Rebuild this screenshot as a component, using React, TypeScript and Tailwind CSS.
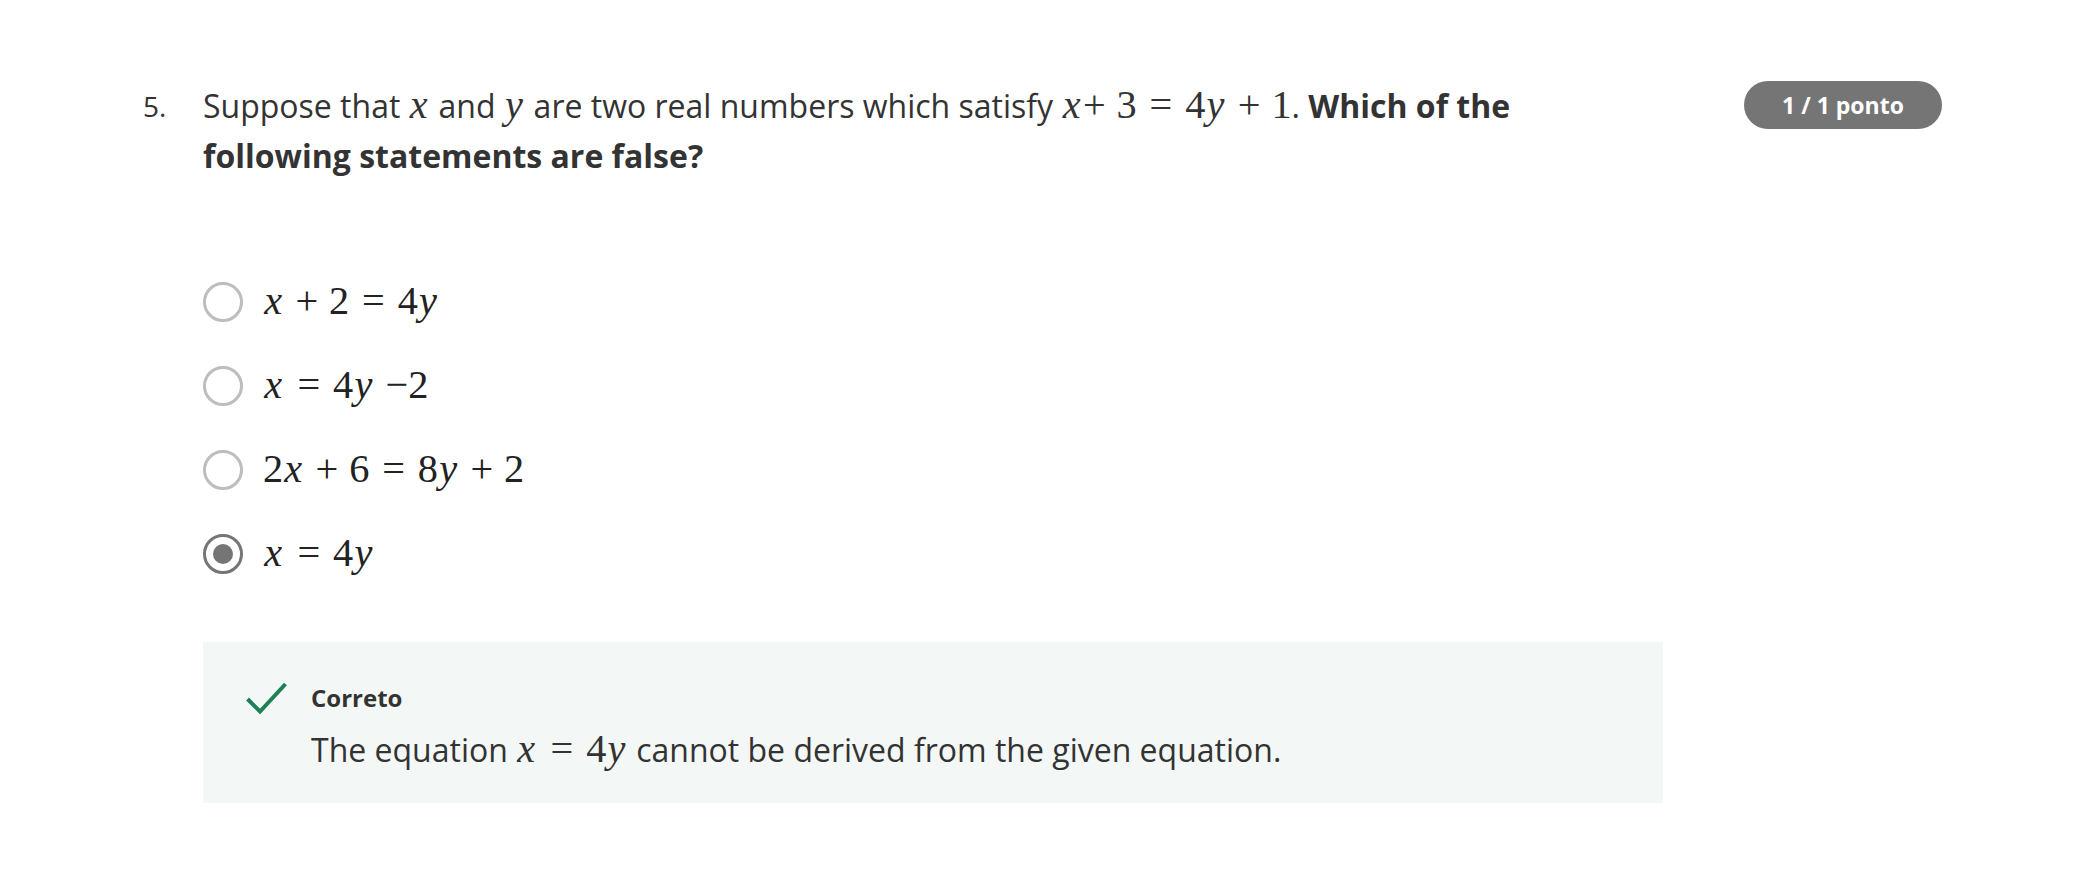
import type { ReactNode } from 'react'

// math bits, roughly how KaTeX spaces things (widened a bit for Times glyphs)
const V = ({ children }: { children: ReactNode }) => (
  <span className="italic pl-[0.03em] pr-[0.06em]">{children}</span>
)
const Bin = ({ children }: { children: ReactNode }) => (
  <span className="mx-[0.27em]">{children}</span>
)
const Rel = ({ children }: { children: ReactNode }) => (
  <span className="mx-[0.32em]">{children}</span>
)
const M = ({ children }: { children: ReactNode }) => (
  <span className="text-[1.26em] leading-none whitespace-nowrap font-['Liberation_Serif','DejaVu_Serif',serif]">
    {children}
  </span>
)

const options = [
  {
    id: 'a',
    checked: false,
    label: (
      <M>
        <V>x</V>
        <Bin>+</Bin>2<Rel>=</Rel>4<V>y</V>
      </M>
    ),
  },
  {
    id: 'b',
    checked: false,
    label: (
      <M>
        <V>x</V>
        <Rel>=</Rel>4<V>y</V>
        <span className="ml-[0.27em]">−</span>2
      </M>
    ),
  },
  {
    id: 'c',
    checked: false,
    label: (
      <M>
        2<V>x</V>
        <Bin>+</Bin>6<Rel>=</Rel>8<V>y</V>
        <Bin>+</Bin>2
      </M>
    ),
  },
  {
    id: 'd',
    checked: true,
    label: (
      <M>
        <V>x</V>
        <Rel>=</Rel>4<V>y</V>
      </M>
    ),
  },
]

function Radio({ checked }: { checked: boolean }) {
  return checked ? (
    <span className="w-10 h-10 rounded-full border-[3px] border-[#757575] flex items-center justify-center shrink-0">
      <span className="w-5 h-5 rounded-full bg-[#757575]" />
    </span>
  ) : (
    <span className="w-10 h-10 rounded-full border-[3px] border-[#bdbdbd] shrink-0" />
  )
}

export default function App() {
  return (
    <div className="min-h-[874px] bg-white text-[#333333] font-['Open_Sans','Noto_Sans',sans-serif]">
      <div className="flex items-start pl-[143px] pr-[138px] pt-[81px]">
        <span className="w-[60px] shrink-0 text-[28px] leading-[50px]">5.</span>

        <div className="w-[1460px] shrink-0">
          <p className="w-[1360px] text-[32px] leading-[50px]">
            Suppose that <M><V>x</V></M> and <M><V>y</V></M> are two real numbers which satisfy{' '}
            <M>
              <V>x</V>
              <span className="mr-[0.27em]">+</span>3<Rel>=</Rel>4<V>y</V>
              <Bin>+</Bin>1
            </M>
            . <span className="font-bold">Which of the following statements are false?</span>
          </p>

          <div className="mt-[91px] flex flex-col gap-6">
            {options.map((o) => (
              <label key={o.id} className="h-[60px] flex items-center gap-5 text-[32px]">
                <Radio checked={o.checked} />
                <span className="text-[#222222]">{o.label}</span>
              </label>
            ))}
          </div>

          <div className="mt-[58px] h-[161px] bg-[#f3f8f6] flex gap-6 pl-[43px] pt-[41px]">
            <svg width="41" height="32" viewBox="0 0 41 32" className="shrink-0 -mt-px">
              <polyline
                points="1.5,17 14,29.5 39.5,2"
                fill="none"
                stroke="#1e8155"
                strokeWidth="4"
              />
            </svg>
            <div>
              <div className="text-[24px] leading-[30px] font-bold">Correto</div>
              <p className="mt-[12px] text-[32px] leading-[50px]">
                The equation{' '}
                <M>
                  <V>x</V>
                  <Rel>=</Rel>4<V>y</V>
                </M>{' '}
                cannot be derived from the given equation.
              </p>
            </div>
          </div>
        </div>

        <div className="ml-auto w-[198px] h-[48px] rounded-full bg-[#757575] text-white font-bold text-[23px] flex items-center justify-center">
          1 / 1 ponto
        </div>
      </div>
    </div>
  )
}
